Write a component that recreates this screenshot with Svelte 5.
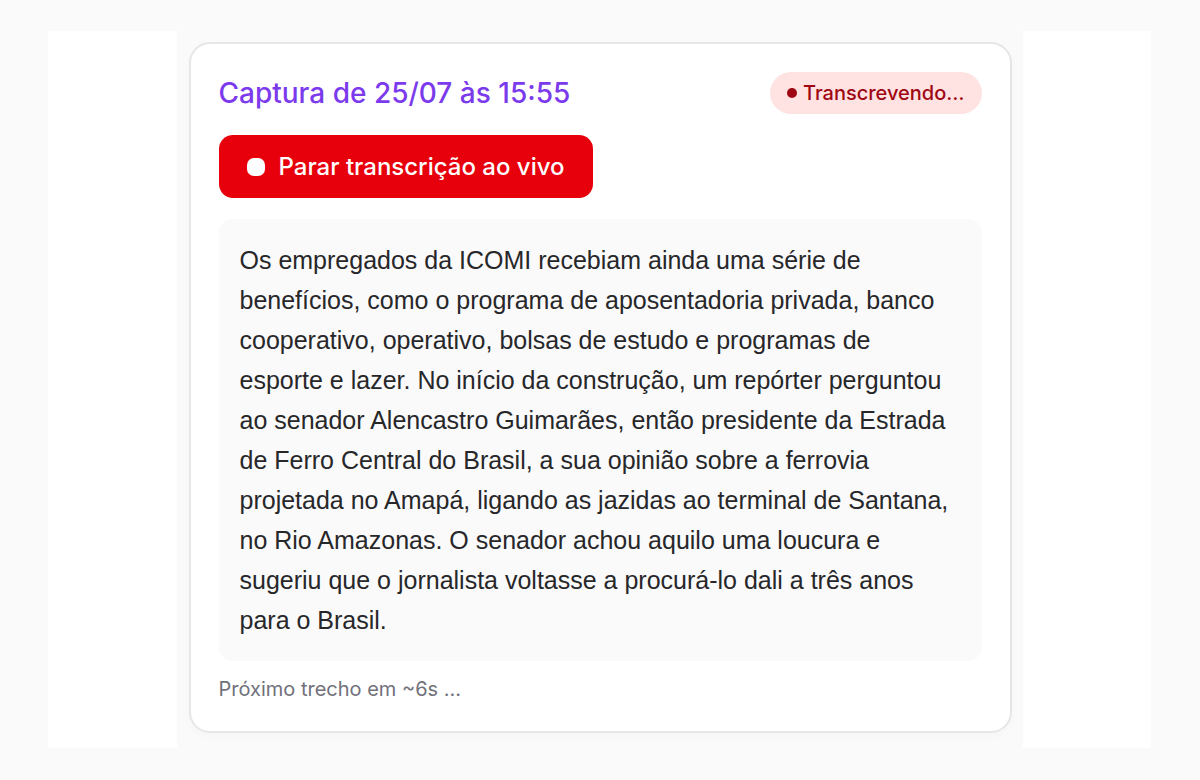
<script>
  const title = 'Captura de 25/07 às 15:55';
  const transcript =
    'Os empregados da ICOMI recebiam ainda uma série de benefícios, como o programa de aposentadoria privada, banco cooperativo, operativo, bolsas de estudo e programas de esporte e lazer. No início da construção, um repórter perguntou ao senador Alencastro Guimarães, então presidente da Estrada de Ferro Central do Brasil, a sua opinião sobre a ferrovia projetada no Amapá, ligando as jazidas ao terminal de Santana, no Rio Amazonas. O senador achou aquilo uma loucura e sugeriu que o jornalista voltasse a procurá-lo dali a três anos para o Brasil.';
</script>

<div class="page">
  <div class="stage">
    <main class="column">
      <article class="card">
        <header>
          <h1>{title}</h1>
          <span class="badge"><span class="dot"></span>Transcrevendo…</span>
        </header>
        <button type="button">
          <span class="stop"></span>
          Parar transcrição ao vivo
        </button>
        <p class="transcript">{transcript}</p>
        <p class="next">Próximo trecho em ~6s …</p>
      </article>
    </main>
  </div>
</div>

<style>
  :global(body) {
    margin: 0;
    background: #fafafa;
  }
  .page {
    box-sizing: border-box;
    min-height: 100vh;
    padding: 31px 49px 32px 48px;
    background: #fafafa;
    font-family: Inter, 'Liberation Sans', sans-serif;
  }
  .stage {
    display: flex;
    justify-content: center;
    background: #fff;
  }
  .column {
    box-sizing: border-box;
    width: 100%;
    max-width: 846px;
    padding: 11px 11px 15px 12px;
    overflow: hidden;
    background: #fafafa;
  }
  .card {
    box-sizing: border-box;
    padding: 28px;
    border: 2px solid #e6e6e8;
    border-radius: 21px;
    background: #fff;
    box-shadow: 0 4px 10px rgba(0, 0, 0, 0.02);
  }
  header {
    display: flex;
    align-items: center;
    justify-content: space-between;
    gap: 16px;
    margin-bottom: 21px;
  }
  h1 {
    margin: 0;
    color: #7c3aed;
    font-size: 28px;
    font-weight: 500;
    line-height: 36px;
  }
  .badge {
    display: flex;
    align-items: center;
    gap: 6px;
    padding: 0 17px;
    border-radius: 21px;
    background: #ffe2e2;
    color: #9f0712;
    font-size: 20px;
    font-weight: 500;
    line-height: 42px;
    white-space: nowrap;
  }
  .dot {
    width: 10px;
    height: 10px;
    border-radius: 50%;
    background: #9f0712;
  }
  button {
    display: flex;
    align-items: center;
    gap: 14px;
    padding: 0 28px;
    border: 0;
    border-radius: 14px;
    background: #e7000b;
    color: #fff;
    font: 500 24px/63px Inter, 'Liberation Sans', sans-serif;
  }
  .stop {
    width: 18px;
    height: 18px;
    border-radius: 7px;
    background: #fff;
  }
  .transcript {
    margin: 21px 0 0;
    padding: 21px;
    border-radius: 14px;
    background: #fafafa;
    color: #27272a;
    font-family: 'Liberation Sans', Arial, sans-serif;
    font-size: 25px;
    line-height: 40px;
  }
  .next {
    margin: 14px 0 0;
    color: #71717b;
    font-size: 20px;
    line-height: 28px;
  }
</style>
